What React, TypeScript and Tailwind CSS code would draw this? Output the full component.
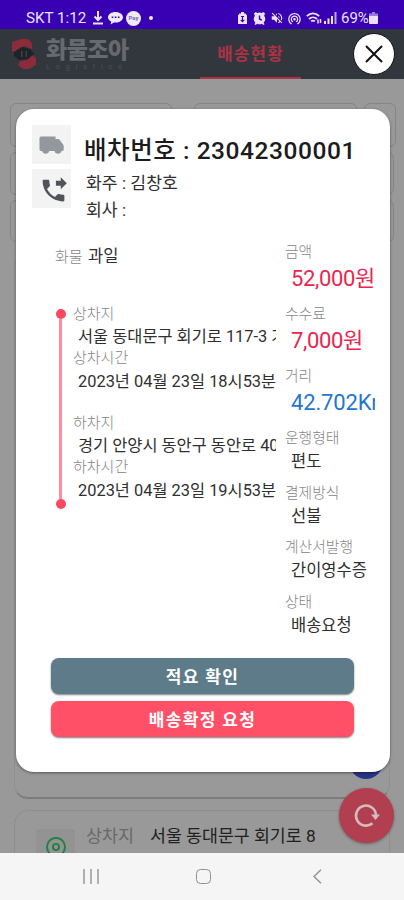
import React from "react";
import { MdPhoneForwarded, MdVolumeOff, MdWifiTethering } from "react-icons/md";

type Field = { label: string; value: string; tone?: "red" | "blue" };

const amounts: Field[] = [
  { label: "금액", value: "52,000원", tone: "red" },
  { label: "수수료", value: "7,000원", tone: "red" },
  { label: "거리", value: "42.702Km", tone: "blue" },
];

const details: Field[] = [
  { label: "운행형태", value: "편도" },
  { label: "결제방식", value: "선불" },
  { label: "계산서발행", value: "간이영수증" },
  { label: "상태", value: "배송요청" },
];

function StatusBar() {
  return (
    <div className="flex h-[29px] shrink-0 items-center bg-[#3900b3] pt-[7px] text-[15px] text-[#e9e2f8]">
      <span className="ml-[26px] w-[66px] whitespace-nowrap pt-[1px] text-[15.200px] leading-none">SKT 1:12</span>
      <svg className="h-[14px] w-[12px]" viewBox="0 0 12 14" fill="none" stroke="currentColor" strokeWidth="2">
        <path d="M6 0v8M2.500 5.500 6 9l3.500-3.500M1 12.500h10" />
      </svg>
      <svg className="ml-1 h-[14px] w-[15px]" viewBox="0 0 15 14">
        <path fill="#f0ebfa" d="M7.500 1C3.400 1 0 3.200 0 6.300c0 1.900 1.300 3.400 3.200 4.300L2.600 13.600l3.300-2.100c.5.100 1 .1 1.600.1 4.100 0 7.500-2.300 7.500-5.300S11.600 1 7.500 1Z" />
        <path stroke="#3900b3" strokeWidth="1.600" strokeDasharray="1.600 1.500" d="M3.700 6.300h8" />
      </svg>
      <span className="ml-[3px] flex size-[15px] items-center justify-center rounded-full bg-[#efeafa] text-[6px] font-bold leading-none text-[#7c62bc]">Pay</span>
      <span className="ml-[8px] size-[4px] rounded-full bg-[#efeafa]" />
      <svg className="ml-[85px] h-[13px] w-[9px]" viewBox="0 0 9 13">
        <path fill="#e9e2f8" d="M3 0h3v1.500h1.500l1.500 2V12H0V3.500l1.500-2H3Z" />
        <path stroke="#3900b3" strokeWidth="1.100" fill="none" d="M3 4.500h3M4.500 5v4.500M2.700 7.800l1.800 1.800 1.800-1.800" />
      </svg>
      <svg className="ml-[6px] size-[13px]" viewBox="0 0 14 14" fill="currentColor">
        <path d="M1 1.500 3 0l1.500 1.200a6 6 0 0 1 5 0L11 0l2 1.500-1 2.500a6 6 0 0 1-.5 7.500l1 1.700-1.500.8-1.500-1.300a6 6 0 0 1-5 0L3 14l-1.500-.8 1-1.700A6 6 0 0 1 2 4Z" />
        <path d="M7 3.800v3.700l2.500 1.300" fill="none" stroke="#3900b3" strokeWidth="1.500" />
      </svg>
      <MdVolumeOff className="ml-[4px] size-[14px]" />
      <MdWifiTethering className="ml-[3px] size-[15px]" />
      <svg className="ml-[4px] h-[13px] w-[16px]" viewBox="0 0 16 13" fill="none" stroke="currentColor" strokeWidth="1.800">
        <path d="M.8 4.200C4.500.5 9.500.5 13.200 4.200M3 7c2.300-2.300 5.700-2.300 8 0M5.200 9.300c1-1 2.600-1 3.600 0" />
        <path d="M12 7.500v4M14.500 7v4" strokeWidth="1.500" />
      </svg>
      <svg className="ml-[2px] h-[12px] w-[13px]" viewBox="0 0 13 12" fill="currentColor">
        <path d="M0 9h2v3H0ZM3.500 6.500h2V12h-2ZM7 4h2v8H7Z" />
        <path d="M10.500 0h2v12h-2Z" opacity=".75" />
      </svg>
      <span className="ml-[4px] w-[28px] whitespace-nowrap text-[15px] leading-none">69%</span>
      <svg className="h-[12px] w-[9px]" viewBox="0 0 9 12" fill="currentColor">
        <path d="M3 0h3v1.500h3V4H0V1.500h3Z" opacity=".55" />
        <path d="M0 4h9v7a1 1 0 0 1-1 1H1a1 1 0 0 1-1-1Z" />
      </svg>
    </div>
  );
}

function Header() {
  return (
    <header className="flex h-[50px] shrink-0 bg-[#32373e]">
      <svg className="ml-[12px] mt-[9px] h-[32px] w-[25px]" viewBox="0 0 25 32">
        <path fill="#8c2b3a" d="M0 4 9 1h7l4 4v6l-8-3-7 4-1 4-4-3ZM8 23l7-1 5-5 4 3v7l-7 4h-6l-5-4Z" />
        <path fill="#1f2327" d="M2 14 10 9l8 2 4 5-6 5-9 1-5-4Z" />
        <path fill="#3d4248" d="M9 13h1.500v6H9Zm4.500 0H15v6h-1.500Z" />
      </svg>
      <div className="ml-[9px] flex w-[84px] flex-col pt-[9px]">
        <span className="whitespace-nowrap text-[23px] font-black leading-[25px] tracking-[-0.500px] text-[#666a6f]">화물조아</span>
        <span className="whitespace-nowrap text-[7.500px] leading-[8px] tracking-[5.700px] text-[#4b5056]">Logistics</span>
      </div>
      <div className="ml-[70px] flex w-[101px] items-center justify-center border-b-2 border-[#a93345] pt-[3px] text-[16.800px] font-bold tracking-[1.200px] text-[#a93345]">
        배송현황
      </div>
      <button className="ml-[52px] mt-[4px] flex size-[42px] items-center justify-center rounded-full border border-[#111418] bg-white">
        <svg className="size-[18px]" viewBox="0 0 18 18" stroke="#111" strokeWidth="2">
          <path d="m1 1 16 16M17 1 1 17" />
        </svg>
      </button>
    </header>
  );
}

function Backdrop() {
  return (
    <main className="flex h-[774px] shrink-0 flex-col overflow-hidden bg-[#999] pt-6">
      <div className="flex h-[44px] shrink-0 gap-[22px] pl-[10px]">
        <div className="w-[162px] rounded-[6px] border border-[#858585]" />
        <div className="w-[163px] rounded-[6px] border border-[#858585]" />
        <div className="ml-[-15px] w-[32px] rounded-[6px] border border-[#858585]" />
      </div>
      <div className="ml-[10px] mt-[5px] h-[43px] w-[384px] shrink-0 rounded-[6px] border border-[#858585]" />
      <div className="ml-[10px] mt-[5px] h-[42px] w-[384px] shrink-0 rounded-[6px] border border-[#858585]" />
      <div className="mx-[14px] mt-[10px] flex h-[547px] shrink-0 items-end justify-end rounded-[14px] border border-b-2 border-[#909090] border-b-[#7c7c7c] bg-[#999] pb-[18px] pr-[6px]">
        <div className="size-[34px] rounded-full bg-[#293487]" />
      </div>
      <div className="mx-[14px] mt-[11px] flex h-[100px] shrink-0 rounded-t-[14px] border border-[#8e8e8e]">
        <div className="ml-[21px] mt-[18px] flex h-[40px] w-[39px] justify-center bg-[#939393] pt-[8px]">
          <svg className="size-[20px]" viewBox="0 0 20 20" fill="none" stroke="#218044" strokeWidth="1.900">
            <path d="M4.500 17A9 9 0 1 1 15.500 17" />
            <circle cx="10" cy="10" r="3.100" />
          </svg>
        </div>
        <span className="ml-[11px] mt-[12px] w-[64px] whitespace-nowrap text-[17.400px] leading-[26px] text-[#696969]">상차지</span>
        <span className="mt-[12px] whitespace-nowrap text-[17.300px] leading-[26px] text-[#202020]">서울 동대문구 회기로 8</span>
      </div>
    </main>
  );
}

function NavigationBar() {
  return (
    <nav className="flex h-[47px] shrink-0 items-center bg-[#f5f5f5] pl-[83px] text-[#929292]">
      <svg className="h-[15px] w-[16px]" viewBox="0 0 16 15" stroke="currentColor" strokeWidth="1.400">
        <path d="M1 0v15M8 0v15M15 0v15" />
      </svg>
      <div className="ml-[97px] size-[15px] rounded-[4.500px] border-[1.500px] border-[#929292]" />
      <svg className="ml-[102px] h-[15px] w-[9px]" viewBox="0 0 9 15" fill="none" stroke="currentColor" strokeWidth="1.500">
        <path d="M8 .8 1 7.500l7 6.700" />
      </svg>
    </nav>
  );
}

function Stop({ place, address, timeLabel, time }: { place: string; address: string; timeLabel: string; time: string }) {
  return (
    <div className="flex h-[90px] flex-col overflow-hidden whitespace-nowrap">
      <span className="h-[22px] text-[15px] font-light leading-[23px] text-[#858585]">{place}</span>
      <span className="h-[22px] pl-[5px] text-[16.400px] leading-[24px] text-[#2f2f2f]">{address}</span>
      <span className="h-[22px] text-[15px] font-light leading-[23px] text-[#858585]">{timeLabel}</span>
      <span className="h-[24px] pl-[5px] text-[16.400px] leading-[26px] text-[#2f2f2f]">{time}</span>
    </div>
  );
}

function OrderDialog() {
  return (
    <section className="absolute left-[16px] top-[109px] flex h-[663px] w-[374px] flex-col rounded-[18px] bg-white shadow-[0_1px_3px_rgba(0,0,0,0.45)]">
      <div className="flex h-[130px] pl-[16px] pt-[16px]">
        <div className="flex w-[39px] flex-col gap-[5px]">
          <div className="flex size-[39px] items-center justify-center bg-[#f3f3f3] text-[#92989d]">
            <svg className="h-[18px] w-[25px]" viewBox="0 0 25 18" fill="currentColor">
              <path d="M2 .5h14.500V3H19q1 0 1.600.8l3.500 4.600q.6.800.6 1.800v3.300q0 1.500-1.500 1.500h-.7a3.600 3.600 0 0 1-7 0H10.200a3.600 3.600 0 0 1-7 0H2q-1.500 0-1.500-1.500V2Q.5.500 2 .5Z" />
            </svg>
          </div>
          <div className="flex size-[39px] items-center justify-center bg-[#f3f3f3] text-[#505357]">
            <MdPhoneForwarded className="ml-1 mt-1 size-[29px]" />
          </div>
        </div>
        <div className="flex flex-col whitespace-nowrap pl-[13px] text-[#303030]">
          <h1 className="h-[44px] pt-[10px] text-[24.500px] font-medium leading-[32px] tracking-[0.550px] text-[#1c1c1c]">배차번호 : 23042300001</h1>
          <p className="h-[27px] pl-[2px] text-[17.200px] leading-[28px]">화주 : 김창호</p>
          <p className="h-[27px] pl-[2px] text-[17.200px] leading-[29px]">회사 :</p>
        </div>
      </div>
      <div className="flex h-[410px] pl-[39px]">
        <div className="flex w-[221px] flex-col">
          <div className="flex h-[64px] whitespace-nowrap pt-[6px] leading-[24px]">
            <span className="w-[33px] text-[15px] font-light text-[#858585]">화물</span>
            <span className="text-[16.500px] text-[#303030]">과일</span>
          </div>
          <div className="flex">
            <div className="flex w-[18px] flex-col items-center pr-[7px] pt-[6px]">
              <div className="size-[10px] shrink-0 rounded-full bg-[#fb4861]" />
              <div className="h-[180px] w-[3px] bg-[#ff8e9c]" />
              <div className="size-[10px] shrink-0 rounded-full bg-[#fb4861]" />
            </div>
            <div className="flex w-[203px] flex-col gap-[19px]">
              <Stop place="상차지" address="서울 동대문구 회기로 117-3 가" timeLabel="상차시간" time="2023년 04월 23일 18시53분" />
              <Stop place="하차지" address="경기 안양시 동안구 동안로 40" timeLabel="하차시간" time="2023년 04월 23일 19시53분" />
            </div>
          </div>
        </div>
        <div className="ml-[9px] flex w-[90px] flex-col overflow-hidden whitespace-nowrap">
          {amounts.map((f) => (
            <div key={f.label} className="flex h-[62px] flex-col">
              <span className="h-[26px] text-[14.800px] font-light leading-[27px] text-[#858585]">{f.label}</span>
              <span className={`h-[28px] overflow-hidden pl-[6px] leading-[28px] ${f.tone === "red" ? "text-[22px] tracking-[-0.350px] text-[#e8264f]" : "text-[22px] tracking-[-0.150px] text-[#2476d0]"}`}>{f.value}</span>
            </div>
          ))}
          {details.map((f) => (
            <div key={f.label} className="flex h-[54.700px] flex-col">
              <span className="h-[26px] text-[14.800px] font-light leading-[27px] text-[#858585]">{f.label}</span>
              <span className="h-[20px] pl-[6px] text-[16.500px] leading-[22px] text-[#2f2f2f]">{f.value}</span>
            </div>
          ))}
        </div>
      </div>
      <div className="mt-[9px] flex flex-col gap-[7px] pl-[35px] text-[17px] font-bold tracking-[1.350px] text-white">
        <button className="h-[36px] w-[303px] rounded-[8px] bg-[#5d7b89] pt-[3px] shadow-[0_1px_2px_rgba(0,0,0,0.5)]">적요 확인</button>
        <button className="h-[36px] w-[303px] rounded-[8px] bg-[#ff5067] pt-[3px] shadow-[0_1px_2px_rgba(0,0,0,0.5)]">배송확정 요청</button>
      </div>
    </section>
  );
}

export default function App() {
  return (
    <div className="relative flex h-[900px] w-[404px] flex-col overflow-hidden font-['Roboto','Noto_Sans_CJK_KR',sans-serif]">
      <StatusBar />
      <Header />
      <Backdrop />
      <NavigationBar />
      <OrderDialog />
      <button className="absolute left-[339px] top-[788px] flex size-[55px] items-center justify-center rounded-full bg-[#b23f50] shadow-[0_1px_3px_rgba(0,0,0,0.35)]">
        <svg className="size-[27px]" viewBox="0 0 27 27" fill="none">
          <path stroke="#d2bcc0" strokeWidth="2.600" d="M19.500 21.200A10 10 0 1 1 23 13" />
          <path fill="#d2bcc0" d="M18 12.500h9L22.500 18Z" />
        </svg>
      </button>
    </div>
  );
}
